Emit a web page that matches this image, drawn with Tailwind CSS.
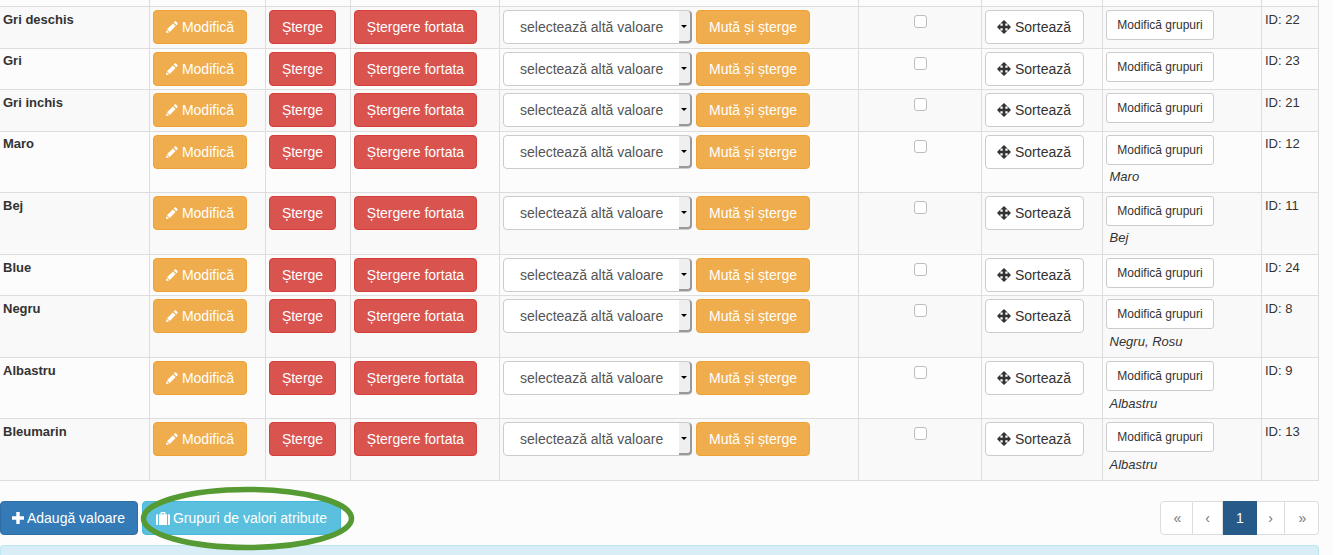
<!DOCTYPE html>
<html lang="ro">
  <head>
    <meta charset="UTF-8" />
    <title>Valori atribut</title>
    <script src="https://cdn.jsdelivr.net/npm/@tailwindcss/browser@4"></script>
  </head>
  <body class="relative h-[555px] overflow-hidden bg-white font-['Liberation_Sans',sans-serif] text-sm text-[#333]">
    <div class="w-[1333px] h-[555px] bg-[#fcfcfc]">
      <!-- Values table -->
      <table class="table-fixed w-[1319px] border-separate border-spacing-0">
        <colgroup>
          <col class="w-[150px]" /><col class="w-[116px]" /><col class="w-[85px]" /><col class="w-[149px]" /><col class="w-[359px]" /><col class="w-[123px]" /><col class="w-[121px]" /><col class="w-[159px]" /><col class="w-[57px]" />
        </colgroup>
        <tbody id="rows"></tbody>
      </table>

      <!-- Bottom buttons + pagination -->
      <div class="flex justify-between w-[1319px] mt-[20px]">
        <div class="flex gap-1">
          <button class="flex items-center justify-center gap-[3px] pr-px w-[138px] h-[34px] bg-[#337ab7] border border-[#2e6da4] rounded-[4px] text-white">
            <svg class="w-3 h-3" viewBox="0 0 12 12" fill="#fff"><path d="M4.3 0h3.4v4.3H12v3.4H7.700V12H4.300V7.700H0V4.300h4.300z" /></svg>
            Adaugă valoare
          </button>
          <button class="flex items-center justify-center gap-[3px] w-[199px] h-[34px] bg-[#5bc0de] border border-[#46b8da] rounded-[4px] text-white">
            <svg class="w-[14px] h-[13px]" viewBox="0 0 14 13" fill="#fff"><path d="M4.500 2V.8C4.500.3 4.800 0 5.300 0h3.400c.5 0 .8.300.8.800V2H8.300V1.200H5.700V2zM0 3.500C0 2.700.5 2.200 1.200 2.200H2V13h-.8C.5 13 0 12.500 0 11.700zM3 2.200h8V13H3zM12 2.200h.8c.7 0 1.200.5 1.200 1.300v8.200c0 .8-.5 1.300-1.200 1.300H12z" /></svg>
            Grupuri de valori atribute
          </button>
        </div>
        <nav class="flex h-[34px] text-[#777]">
          <a class="flex items-center justify-center w-[33px] pl-[2px] bg-white border border-[#ddd] rounded-l-[4px]">«</a>
          <a class="flex items-center justify-center w-[30px] bg-white border-y border-r border-[#ddd]">‹</a>
          <a class="flex items-center justify-center w-[34px] bg-[#265a88] border border-[#265a88] text-white">1</a>
          <a class="flex items-center justify-center w-[28px] bg-white border-y border-r border-[#ddd]">›</a>
          <a class="flex items-center justify-center w-[34px] pl-[2px] bg-white border-y border-r border-[#ddd] rounded-r-[4px]">»</a>
        </nav>
      </div>

      <!-- Info alert, cut off by the window -->
      <div class="w-[1319px] mt-[10px] h-[10px] bg-[#d9edf7] border-x border-t border-[#bce8f1] rounded-t-[4px]"></div>
    </div>

    <!-- Hand-drawn marker round the button -->
    <svg class="absolute left-[135px] top-[482px] w-[225px] h-[73px] pointer-events-none" viewBox="0 0 225 73" fill="none">
      <ellipse cx="112.500" cy="36.500" rx="104" ry="29" stroke="#559a33" stroke-width="5.500" />
    </svg>

    <script>
      const pencil = `<svg class="w-3 h-3" viewBox="0 0 12 12" fill="#fff"><path d="M8.700.6c.4-.4 1-.4 1.400 0l1.300 1.300c.4.4.4 1 0 1.400l-1 1L7.700 1.600zM6.900 2.400l2.700 2.700-5.800 5.800L1 8.200zM.6 9 3 11.400l-3 .6z" /></svg>`;
      const move = `<svg class="w-[14px] h-[14px] shrink-0" viewBox="0 0 14 14" fill="#333"><path d="M7 0l3.600 3.400H8.300v2.300h2.300V3.400L14 7l-3.400 3.600V8.300H8.300v2.300h2.300L7 14l-3.600-3.400h2.300V8.300H3.400v2.300L0 7l3.400-3.600v2.300h2.300V3.400H3.400z" /></svg>`;

      const cellClass = "px-[3px] align-top border-r border-b border-[#ddd]";
      const warnBtn = "flex items-center justify-center h-[34px] bg-[#f0ad4e] border border-[#eea236] rounded-[4px] text-white";
      const dangerBtn = "flex items-center justify-center h-[34px] bg-[#d9534f] border border-[#d43f3a] rounded-[4px] text-white";

      // name, id, group under the button, row height, striped, text offset, group offset
      const rows = [
        ["Gri deschis", 22, "", "h-[42px]", "bg-[#f9f9f9]", "pt-[4px]", ""],
        ["Gri", 23, "", "h-[41px]", "", "pt-[3px]", ""],
        ["Gri inchis", 21, "", "h-[42px]", "bg-[#f9f9f9]", "pt-[4px]", ""],
        ["Maro", 12, "Maro", "h-[61px]", "", "pt-[3px]", "mt-[3px]"],
        ["Bej", 11, "Bej", "h-[62px]", "bg-[#f9f9f9]", "pt-[4px]", "mt-[3px]"],
        ["Blue", 24, "", "h-[41px]", "", "pt-[4px]", ""],
        ["Negru", 8, "Negru, Rosu", "h-[62px]", "bg-[#f9f9f9]", "pt-[4px]", "mt-[4px]"],
        ["Albastru", 9, "Albastru", "h-[61px]", "", "pt-[4px]", "mt-[4px]"],
        ["Bleumarin", 13, "Albastru", "h-[62px]", "bg-[#f9f9f9]", "pt-[4px]", "mt-[4px]"],
      ];

      let html = `<tr class="h-[7px]">${`<td class="border-r border-b border-[#ddd]"></td>`.repeat(9)}</tr>`;
      for (const [name, id, group, height, stripe, textTop, groupTop] of rows) {
        html += `
          <tr class="${height} ${stripe}">
            <td class="${cellClass} ${textTop} text-[13px] leading-[18.570px] font-bold">${name}</td>
            <td class="${cellClass} pt-[3px]"><button class="${warnBtn} gap-[4px] w-[94px]">${pencil}Modifică</button></td>
            <td class="${cellClass} pt-[3px]"><button class="${dangerBtn} w-[67px]">Șterge</button></td>
            <td class="${cellClass} pt-[3px]"><button class="${dangerBtn} w-[123px]">Ștergere fortata</button></td>
            <td class="${cellClass} pt-[3px]">
              <div class="flex gap-1">
                <div class="relative w-[189px] h-[34px]">
                  <select class="w-full h-full pl-4 appearance-none bg-white border border-[#ccc] rounded-[4px] text-[#555]"><option>selectează altă valoare</option></select>
                  <div class="absolute top-px right-0 bottom-px w-[13px] flex items-center justify-center pr-[2px] bg-[#efefef] border-r-2 border-b-2 border-[#999] rounded-r-[4px] pointer-events-none">
                    <span class="w-0 h-0 border-x-[3px] border-t-[3px] border-x-transparent border-t-black"></span>
                  </div>
                </div>
                <button class="${warnBtn} w-[114px]">Mută și șterge</button>
              </div>
            </td>
            <td class="${cellClass} pt-[3px] text-center"><input type="checkbox" class="appearance-none block mx-auto mt-[5px] w-[13px] h-[13px] bg-white border border-[#bdbdbd] rounded-[3px]" /></td>
            <td class="${cellClass} pt-[3px]"><button class="flex items-center justify-center gap-[4px] pr-px w-[99px] h-[34px] bg-white border border-[#ccc] rounded-[4px]">${move}Sortează</button></td>
            <td class="${cellClass} pt-[3px]">
              <button class="block w-[108px] h-[30px] bg-white border border-[#ccc] rounded-[3px] text-xs">Modifică grupuri</button>
              ${group ? `<div class="${groupTop} pl-[3.500px] text-[13px] leading-[18.570px] italic">${group}</div>` : ""}
            </td>
            <td class="${cellClass} ${textTop} text-[13px] leading-[18.570px]">ID: ${id}</td>
          </tr>`;
      }
      document.getElementById("rows").innerHTML = html;
    </script>
  </body>
</html>
